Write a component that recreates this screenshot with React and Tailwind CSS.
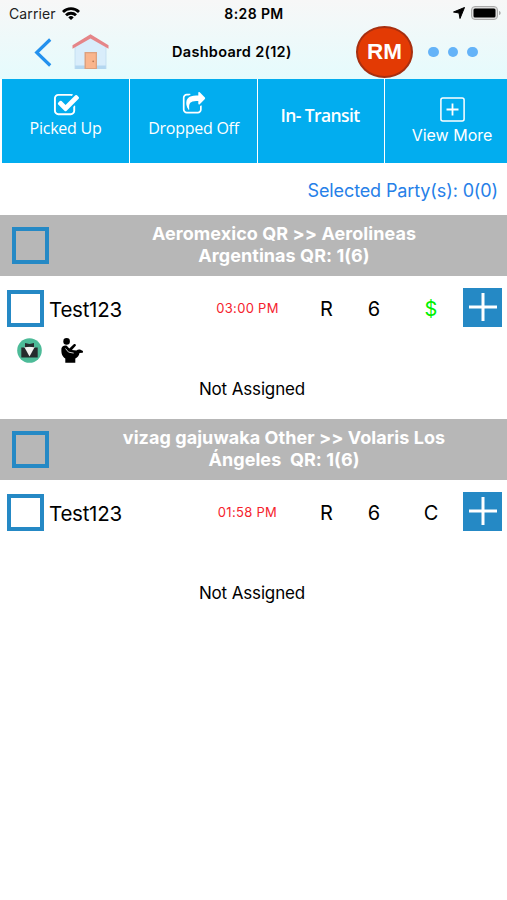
const groups = [
  {
    id: 1,
    lines: ["Aeromexico QR >> Aerolineas", "Argentinas QR: 1(6)"],
    passenger: "Test123",
    time: "03:00 PM",
    type: "R",
    count: "6",
    payment: "$",
    paymentClass: "text-[#00f000]",
    hasBadges: true,
  },
  {
    id: 2,
    lines: ["vizag gajuwaka Other >> Volaris Los", "Ángeles\u00a0 QR: 1(6)"],
    passenger: "Test123",
    time: "01:58 PM",
    type: "R",
    count: "6",
    payment: "C",
    paymentClass: "text-black",
    hasBadges: false,
  },
];

const WifiIcon = () => (
  <svg className="w-[18px] h-[13px]" viewBox="0 0 18 13" fill="none" stroke="#000" strokeWidth="2.8">
    <path d="M1 4.9a11.4 11.4 0 0 1 16 0" />
    <path d="M4 8.3a7.1 7.1 0 0 1 10 0" />
    <path d="M9 12.9 6.3 10.4a3.8 3.8 0 0 1 5.4 0Z" fill="#000" stroke="none" />
  </svg>
);

const HouseIcon = () => (
  <svg className="w-[37px] h-[36px]" viewBox="0 0 37 36">
    <path d="M3 13 18.5 3 34 13v22H3Z" fill="#d9edfb" />
    <path d="M3 31.5h31V35H3Z" fill="#b4d7f0" />
    <path d="M3 13v22M34 13v22" stroke="#bfdcf0" strokeWidth="0.8" />
    <path d="M12.5 18h12.5v17h-12.5Z" fill="#dda17f" />
    <path d="M14 19.3h9.7V34H14Z" fill="#fab58d" />
    <circle cx="21.2" cy="27.3" r="0.9" fill="#b87854" />
    <path d="M0.5 11.3 18.5 0.3l18 11v3.4L18.5 4.5 0.5 14.7Z" fill="#e58588" />
  </svg>
);

const CheckSquareIcon = () => (
  <svg className="w-[27px] h-[27px]" viewBox="0 0 1792 1792" fill="#fff">
    <path d="M1472 930v318q0 119-84.5 203.5t-203.5 84.5h-832q-119 0-203.5-84.5t-84.5-203.5v-832q0-119 84.5-203.5t203.5-84.5h832q63 0 117 25 15 7 18 23 3 17-9 29l-49 49q-10 10-23 10-3 0-9-2-23-6-45-6h-832q-66 0-113 47t-47 113v832q0 66 47 113t113 47h832q66 0 113-47t47-113v-254q0-13 9-22l64-64q10-10 23-10 6 0 12 3 20 8 20 29zm231-489l-814 814q-24 24-57 24t-57-24l-430-430q-24-24-24-57t24-57l110-110q24-24 57-24t57 24l263 263 647-647q24-24 57-24t57 24l110 110q24 24 24 57t-24 57z" />
  </svg>
);

const ShareSquareIcon = () => (
  <svg className="w-[24px] h-[25px]" viewBox="0 0 1792 1792" preserveAspectRatio="none" fill="#fff">
    <path d="M1472 989v259q0 119-84.5 203.5t-203.5 84.5h-832q-119 0-203.5-84.5t-84.5-203.5v-832q0-119 84.5-203.5t203.5-84.5h255q13 0 22.5 9.5t9.5 22.5q0 27-26 32-77 26-133 60-10 4-16 4h-112q-66 0-113 47t-47 113v832q0 66 47 113t113 47h832q66 0 113-47t47-113v-214q0-19 18-29 28-13 54-37 16-16 35-8 21 9 21 29zm237-496l-384 384q-18 19-45 19-12 0-25-5-39-17-39-59v-192h-160q-323 0-438 131-119 137-74 473 3 23-20 34-8 2-12 2-16 0-26-13-10-14-21-31t-39.5-68.5-49.5-99.5-38.5-114-17.5-122q0-49 3.5-91t14-90 28-88 47-81.5 68.5-74 94.5-61.5 124.5-48.5 159.5-30.5 196.5-11h160v-192q0-42 39-59 13-5 25-5 26 0 45 19l384 384q19 19 19 45t-19 45z" />
  </svg>
);

const SuitBadge = () => (
  <svg className="w-[25px] h-[25px]" viewBox="0 0 25 25">
    <circle cx="12.5" cy="12.5" r="12.3" fill="#4dbb98" />
    <path d="M4.3 9.5h16.4v10H4.3Z" fill="#252b2d" />
    <path d="M7.3 9h10.4l-5.2 9.5Z" fill="#f3f3f1" />
    <path d="m8 5 4.5 1L17 5v4.3l-4.5-.6L8 9.3Z" fill="#252b2d" />
  </svg>
);

const SeatedIcon = () => (
  <svg className="w-[22px] h-[25px]" viewBox="0 0 22 25" fill="#000">
    <circle cx="5.6" cy="3.4" r="3.3" />
    <path d="M0.4 10.6C1 8 3.5 7 5.8 7.8l2.5 2.7 4.2-4.1c1.6-1.4 3.3.3 2 1.7l-3.6 3.8 4.4.6c2.2-1.7 4.4-1.1 6.7.5l-.2 1.8-3.3.3c-.4 2.5-1.7 4.2-4.2 5.4v4.2H4.3v-4.2C1.2 18.7.1 15.8.4 10.6Z" />
    <path d="m4.5 10.5 3 3.6 5.2 1" fill="none" stroke="#fff" strokeWidth="0.8" />
  </svg>
);

const Checkbox = () => <div className="w-[37px] h-[37px] shrink-0 border-4 border-[#2589c5]" />;

const StatusBar = () => (
  <div className="h-[26px] grid grid-cols-3 items-center pl-[9px] pr-1.5 text-[14px]">
    <div className="flex items-center gap-1.5">
      <span className="tracking-[0.1px] text-[#222]">Carrier</span>
      <WifiIcon />
    </div>
    <div className="-ml-0.5 text-center font-semibold tracking-[0.4px]">8:28 PM</div>
    <div className="flex items-center justify-end gap-1.5">
      <svg className="w-3 h-3" viewBox="0 0 12 12">
        <path d="M11.5.5 7 11.5 6 6 .5 5Z" fill="#000" stroke="#000" strokeWidth="1" />
      </svg>
      <svg className="w-[30px] h-[14px]" viewBox="0 0 30 14">
        <rect x="0.5" y="0.5" width="26" height="13" rx="3.5" fill="#ddd" stroke="#aaa" />
        <rect x="2.5" y="2.5" width="22" height="9" rx="1.5" fill="#000" />
        <path d="M28 5c2.2.6 2.2 3.4 0 4Z" fill="#aaa" />
      </svg>
    </div>
  </div>
);

const NavBar = () => (
  <div className="h-[52px] flex items-center pl-[34px]">
    <svg className="w-[18px] h-[29px]" viewBox="0 0 18 29" fill="none" stroke="#2391ee" strokeWidth="3.2">
      <path d="M16.2 1.5 2.7 14.5 16.2 27.5" />
    </svg>
    <div className="ml-5">
      <HouseIcon />
    </div>
    <div className="ml-[63px] w-[121px] whitespace-nowrap text-[14.5px] font-semibold tracking-[0.3px]">Dashboard 2(12)</div>
    <div className="ml-[63px] w-[57px] h-[52px] shrink-0 rounded-[50%] border-2 border-[#a72f10] bg-[#e33a04] flex items-center justify-center font-['Liberation_Sans',Arial,sans-serif] text-[22.5px] font-bold text-white">
      RM
    </div>
    <div className="ml-[15px] flex gap-[9px]">
      <span className="w-[10.5px] h-[10px] rounded-full bg-[#64b3f8]" />
      <span className="w-[10.5px] h-[10px] rounded-full bg-[#64b3f8]" />
      <span className="w-[10.5px] h-[10px] rounded-full bg-[#64b3f8]" />
    </div>
  </div>
);

const ActionTabs = () => (
  <div className="h-[84px] ml-0.5 grid grid-cols-[127px_127px_126px_1fr] gap-px font-['Open_Sans','Noto_Sans',sans-serif] text-white [&>div]:bg-[#02adef]">
    <div className="flex flex-col items-center pt-[13px]">
      <div className="h-[26px] pl-0.5">
        <CheckSquareIcon />
      </div>
      <span className="text-[16px] leading-5 tracking-[-0.25px]">Picked Up</span>
    </div>
    <div className="flex flex-col items-center pt-[13px]">
      <div className="h-[26px]">
        <ShareSquareIcon />
      </div>
      <span className="text-[16px] leading-5 tracking-[-0.25px]">Dropped Off</span>
    </div>
    <div className="flex flex-col items-center pt-[26px] pr-0.5">
      <span className="text-[17.5px] leading-5 font-semibold tracking-[-0.6px]">In- Transit</span>
    </div>
    <div className="flex flex-col items-center pt-[18px] pl-3">
      <svg className="w-[25px] h-[25px]" viewBox="0 0 25 25" fill="none" stroke="#fff" strokeWidth="1.5">
        <rect x="0.9" y="0.9" width="23.2" height="23.2" rx="2" />
        <path d="M12.5 6.5v12M6.5 12.5h12" strokeWidth="1.8" />
      </svg>
      <span className="mt-[3px] text-[16px] leading-5 font-['Inter',sans-serif]">View More</span>
    </div>
  </div>
);

const PartyGroup = ({ group }) => (
  <section className="h-[204px]">
    <div className="h-[61px] flex items-center bg-[#b7b7b7] pl-3">
      <Checkbox />
      <div className="ml-[35px] mb-0.5 w-[400px] text-center text-[18px] leading-[22px] font-bold tracking-[0.06px] text-white">
        {group.lines.map((line) => (
          <p key={line}>{line}</p>
        ))}
      </div>
    </div>

    <div className="h-[65px] flex items-center pl-[7px] text-[20px]">
      <Checkbox />
      <div className="ml-[5px] w-[151px] pt-[3px] text-[20.5px] tracking-[-0.25px]">{group.passenger}</div>
      <div className="w-[95px] text-center text-[13px] text-[#f5222d] tracking-[0.3px]">{group.time}</div>
      <div className="w-[63px] text-center">{group.type}</div>
      <div className="w-[32px] text-center">{group.count}</div>
      <div className={`w-[82px] text-center ${group.paymentClass}`}>{group.payment}</div>
      <div className="-ml-[9px] mb-[3px] w-[39px] h-[39px] shrink-0 bg-[#2589c5] flex items-center justify-center">
        <svg className="w-[28px] h-[28px]" viewBox="0 0 28 28" stroke="#fff" strokeWidth="3">
          <path d="M14 0v28M0 14h28" />
        </svg>
      </div>
    </div>

    <div className="h-[38px] flex items-start pl-[17px]">
      {group.hasBadges && (
        <div className="-mt-[3px] flex gap-[19px]">
          <SuitBadge />
          <SeatedIcon />
        </div>
      )}
    </div>
    <p className="pr-[3px] text-center text-[17px] leading-5 tracking-[-0.15px]">Not Assigned</p>
  </section>
);

const App = () => {
  return (
    <div className="w-[507px] h-[900px] overflow-hidden bg-white font-['Inter','Noto_Sans',sans-serif] text-black">
      <header className="h-[79px] bg-linear-to-b from-[#f7f7f7] to-[#e5fbfd]">
        <StatusBar />
        <NavBar />
      </header>
      <ActionTabs />
      <div className="h-[52px] flex items-center justify-end pr-[9px] pt-0.5 text-[18px] tracking-[-0.12px] text-[#2680e8]">
        Selected Party(s): 0(0)
      </div>
      {groups.map((group) => (
        <PartyGroup key={group.id} group={group} />
      ))}
    </div>
  );
};

export default App;
